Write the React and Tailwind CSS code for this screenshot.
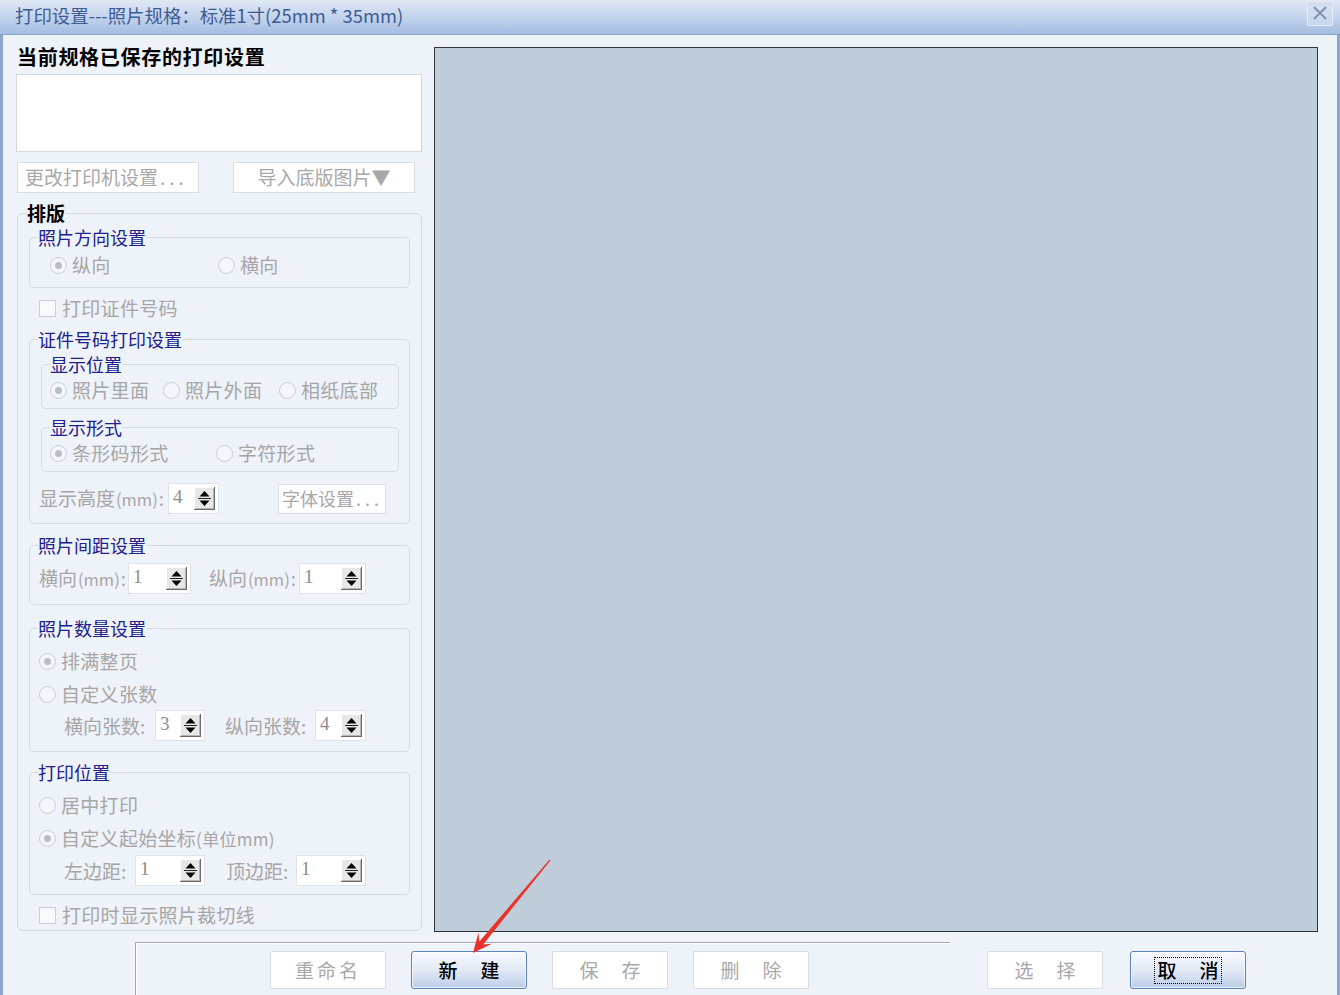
import React from "react";

function Radio({ checked, label, className = "" }) {
  return (
    <div className={"flex items-center h-[22px] shrink-0 " + className}>
      <span className="w-[17px] h-[17px] rounded-full border border-[#c6ccd8] bg-[#f4f6fb] flex items-center justify-center shrink-0">
        {checked && <span className="w-[7px] h-[7px] rounded-full bg-[#b9bdc7]" />}
      </span>
      <span className="ml-[5px] text-[19px] leading-[22px] text-[#a6a6a6] whitespace-nowrap tracking-[0.3px]">{label}</span>
    </div>
  );
}

function Check({ label, className = "" }) {
  return (
    <div className={"flex items-center h-[22px] " + className}>
      <span className="w-[17px] h-[17px] border border-[#c9ced8] bg-[#f8f9fb] shrink-0" />
      <span className="ml-[6px] text-[19px] leading-[22px] text-[#a6a6a6] whitespace-nowrap tracking-[0.3px]">{label}</span>
    </div>
  );
}

function SpinBtn() {
  return (
    <svg width="21" height="23" viewBox="0 0 21 23" className="shrink-0">
      <rect x="0" y="0" width="21" height="23" fill="#e7e7e7" />
      <path d="M0 0.5H20.5M0.5 0V22.5" stroke="#ffffff" strokeWidth="1" />
      <path d="M20.5 0V23M0 22.5H21" stroke="#6b6b6b" strokeWidth="1" />
      <path d="M19.5 1V22M1 21.5H20" stroke="#b5b5b5" strokeWidth="1" />
      <path d="M5.5 9.5L10.5 4L15.5 9.5Z" fill="#000" />
      <path d="M4 11.5H17" stroke="#222" strokeWidth="1" />
      <path d="M5.5 13.5L10.5 19L15.5 13.5Z" fill="#000" />
    </svg>
  );
}

function Spinner({ value, w }) {
  return (
    <div className={w + " h-[31px] bg-white border border-[#dfe3ea] flex items-center justify-between pl-[4px] pr-[3px] shrink-0"}>
      <span className="font-['Liberation_Serif',serif] text-[19px] leading-none text-[#8c8c8c] -mt-[4px]">{value}</span>
      <SpinBtn />
    </div>
  );
}

function Label({ children, w, className = "" }) {
  return (
    <span className={w + " flex items-baseline text-[19px] leading-[22px] text-[#a6a6a6] whitespace-nowrap shrink-0 overflow-visible " + className}>{children}</span>
  );
}

function Mm() {
  return <span className="text-[16.5px] mx-[1px]">(mm)</span>;
}

function Group({ title, h, className = "", children }) {
  return (
    <fieldset className={"border border-[#d5dbe4] rounded-[5px] pl-[8px] pr-[8px] min-w-0 " + h + " " + className}>
      <legend className="text-[18px] leading-[22px] text-[#20208e] px-0">{title}</legend>
      {children}
    </fieldset>
  );
}

function DisBtn({ children, className = "" }) {
  return (
    <div className={"w-[116px] h-[38px] bg-white border border-[#d9dde4] rounded-[2px] flex items-center justify-center text-[19px] text-[#a8a8a8] shrink-0 " + className}>
      {children}
    </div>
  );
}

function EnBtn({ children, focus = false, className = "" }) {
  return (
    <div className={"w-[116px] h-[38px] rounded-[3px] border border-[#5d80bf] bg-gradient-to-b from-[#f6f8fc] via-[#e3eaf6] to-[#bccde9] shadow-[inset_0_0_0_1px_rgba(255,255,255,0.7)] flex items-center justify-center shrink-0 " + className}>
      <div className={"flex items-center h-[27px] px-[2px] text-[19px] text-black font-medium " + (focus ? "border border-dotted border-black" : "")}>
        {children}
      </div>
    </div>
  );
}

export default function App() {
  return (
    <div className="w-[1340px] h-[995px] overflow-hidden bg-[#eef2f9] font-['Noto_Sans_CJK_SC','Noto_Sans',sans-serif] relative">
      {/* title bar */}
      <div className="h-[35px] border-b border-[#8aa3cd] bg-gradient-to-b from-[#dfe8f5] via-[#c3d4ec] to-[#a6bde0] flex items-center justify-between pl-[15px] pr-[7px]">
        <span className="text-[18.4px] leading-none text-[#3e5b95] -mt-[4px] whitespace-nowrap">打印设置---照片规格：标准1寸(25mm * 35mm)</span>
        <div className="w-[26px] h-[25px] -mt-[8px] border border-[#e4ebf6] bg-[#d0dcef]/70 rounded-[2px] flex items-center justify-center">
          <svg width="16" height="16" viewBox="0 0 16 16">
            <path d="M2 2L14 14M14 2L2 14" stroke="#8090ac" strokeWidth="2" />
          </svg>
        </div>
      </div>

      {/* body */}
      <div className="h-[960px] border-l-[3px] border-r-[3px] border-[#8ea4cf] flex flex-col">
        <div className="h-[907px] flex">
          {/* left column */}
          <div className="ml-[13px] w-[406px] flex flex-col">
            <div className="mt-[8px] h-[28px] pl-[1px] text-[20px] leading-[28px] font-bold text-black tracking-[0.7px] whitespace-nowrap">当前规格已保存的打印设置</div>
            <div className="mt-[3px] h-[78px] bg-white border border-[#d3d8e1]" />
            <div className="mt-[10px] h-[31px] flex">
              <div className="ml-[1px] w-[182px] h-[31px] bg-white border border-[#d9dde4] flex items-center pl-[7px] text-[19px] text-[#a8a8a8] whitespace-nowrap">更改打印机设置<span className="tracking-[4px] ml-[2px]">...</span></div>
              <div className="ml-[34px] w-[182px] h-[31px] bg-white border border-[#d9dde4] flex items-center justify-center text-[19px] text-[#a8a8a8] whitespace-nowrap">导入底版图片▼</div>
            </div>

            {/* 排版 */}
            <fieldset className="mt-[9px] ml-[1px] w-[405px] h-[729px] border border-[#d5dbe4] rounded-[6px] pl-[11px] pr-[11px] min-w-0">
              <legend className="ml-[-2px] text-[19px] leading-[22px] font-bold text-black">排版</legend>

              <Group title="照片方向设置" h="h-[62px]" className="mt-[2px]">
                <div className="flex pt-[6px]">
                  <Radio checked label="纵向" className="ml-[12px] w-[168px]" />
                  <Radio label="横向" />
                </div>
              </Group>

              <Check label="打印证件号码" className="mt-[9px] ml-[10px]" />

              <Group title="证件号码打印设置" h="h-[196px]" className="mt-[9px]">
                <Group title="显示位置" h="h-[56px]" className="mt-[3px] ml-[3px] w-[358px]">
                  <div className="flex pt-[4px]">
                    <Radio checked label="照片里面" className="w-[113px]" />
                    <Radio label="照片外面" className="w-[116px]" />
                    <Radio label="相纸底部" />
                  </div>
                </Group>
                <Group title="显示形式" h="h-[56px]" className="mt-[7px] ml-[3px] w-[358px]">
                  <div className="flex pt-[4px]">
                    <Radio checked label="条形码形式" className="w-[166px]" />
                    <Radio label="字符形式" />
                  </div>
                </Group>
                <div className="mt-[11px] flex items-center h-[31px]">
                  <Label w="w-[129px]" className="ml-[1px]">显示高度<Mm />:</Label>
                  <Spinner value="4" w="w-[51px]" />
                  <div className="ml-[59px] w-[108px] h-[30px] bg-white border border-[#d9dde4] flex items-center pl-[3px] text-[18px] text-[#a8a8a8] whitespace-nowrap">字体设置<span className="tracking-[4px] ml-[2px]">...</span></div>
                </div>
              </Group>

              <Group title="照片间距设置" h="h-[71px]" className="mt-[10px]">
                <div className="flex items-center h-[31px] mt-[7px]">
                  <Label w="w-[89px]" className="ml-[1px]">横向<Mm />:</Label>
                  <Spinner value="1" w="w-[63px]" />
                  <Label w="w-[90px]" className="ml-[18px]">纵向<Mm />:</Label>
                  <Spinner value="1" w="w-[67px]" />
                </div>
              </Group>

              <Group title="照片数量设置" h="h-[135px]" className="mt-[12px]">
                <Radio checked label="排满整页" className="mt-[11px] ml-[1px]" />
                <Radio label="自定义张数" className="mt-[11px] ml-[1px]" />
                <div className="flex items-center h-[31px] mt-[5px]">
                  <Label w="w-[91px]" className="ml-[26px]">横向张数:</Label>
                  <Spinner value="3" w="w-[50px]" />
                  <Label w="w-[90px]" className="ml-[20px]">纵向张数:</Label>
                  <Spinner value="4" w="w-[51px]" />
                </div>
              </Group>

              <Group title="打印位置" h="h-[134px]" className="mt-[9px]">
                <Radio label="居中打印" className="mt-[11px] ml-[1px]" />
                <Radio checked label={<>自定义起始坐标<span className="text-[17px]">(单位mm)</span></>} className="mt-[11px] ml-[1px]" />
                <div className="flex items-center h-[31px] mt-[6px]">
                  <Label w="w-[71px]" className="ml-[26px]">左边距:</Label>
                  <Spinner value="1" w="w-[70px]" />
                  <Label w="w-[70px]" className="ml-[21px]">顶边距:</Label>
                  <Spinner value="1" w="w-[70px]" />
                </div>
              </Group>

              <Check label="打印时显示照片裁切线" className="mt-[9px] ml-[10px]" />
            </fieldset>
          </div>

          {/* preview */}
          <div className="ml-[12px] mt-[12px] w-[884px] h-[885px] bg-[#bfcddb] border-[1.5px] border-[#2e353d]" />
        </div>

        {/* bottom bar */}
        <div className="h-[53px] flex items-start">
          <div className="ml-[132px] w-[815px] h-[53px] border-t border-l border-[#a4a8ae] shadow-[inset_1px_1px_0_#ffffff] flex items-start pl-[134px] pt-[8px] gap-[25px]">
            <DisBtn><span className="tracking-[3px]">重命名</span></DisBtn>
            <EnBtn><span>新</span><span className="ml-[23px]">建</span></EnBtn>
            <DisBtn><span>保</span><span className="ml-[23px]">存</span></DisBtn>
            <DisBtn><span>删</span><span className="ml-[23px]">除</span></DisBtn>
          </div>
          <DisBtn className="ml-[37px] mt-[9px]"><span>选</span><span className="ml-[23px]">择</span></DisBtn>
          <EnBtn focus className="ml-[27px] mt-[9px]"><span>取</span><span className="ml-[23px]">消</span></EnBtn>
        </div>
      </div>

      {/* red annotation arrow */}
      <svg className="absolute left-0 top-0 pointer-events-none" width="1340" height="995" viewBox="0 0 1340 995">
        <polygon
          points="473,953 491.8,943.8 483.2,944.6 550.6,860.3 549.4,859.7 479.4,941.4 478.4,932.8"
          fill="#e8322b"
        />
      </svg>
    </div>
  );
}
